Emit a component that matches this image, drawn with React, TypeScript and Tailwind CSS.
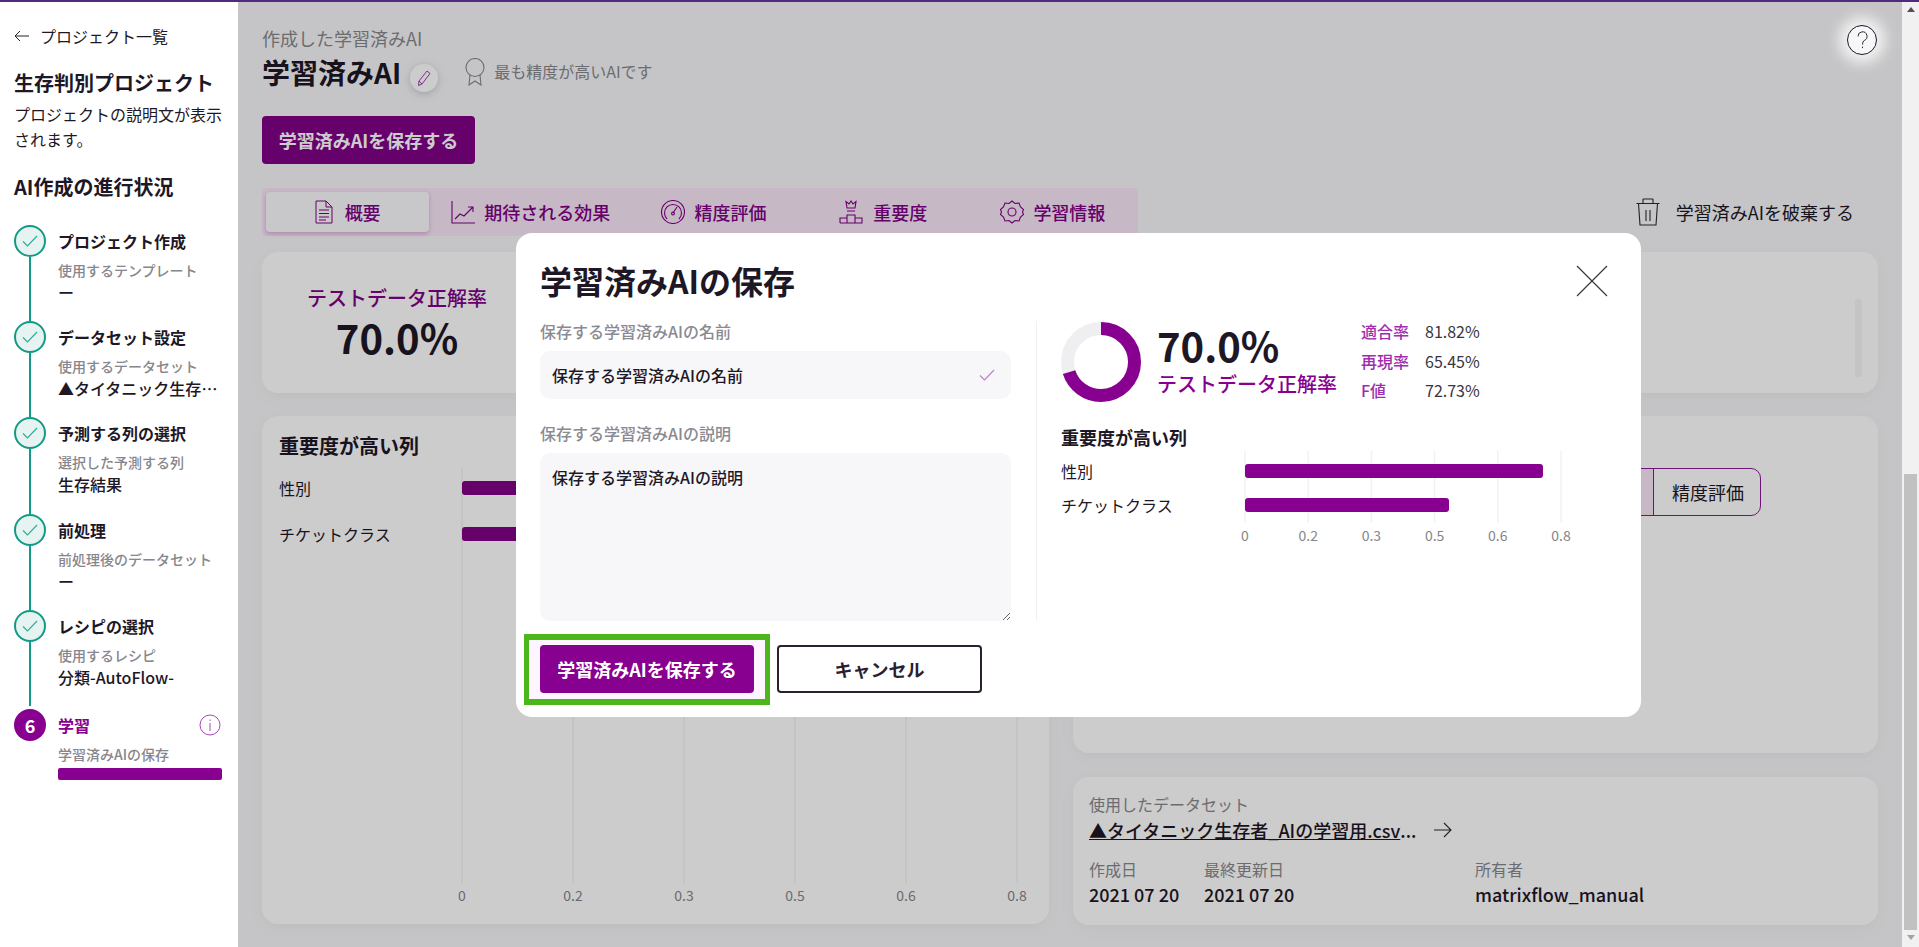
import React from "react";

const Check = ({ className = "" }: { className?: string }) => (
  <svg viewBox="0 0 16 12" className={className} fill="none" stroke="currentColor" strokeWidth="1.1">
    <path d="M1 6.5 L5.5 11 L15 1" />
  </svg>
);

const steps = [
  { t: "プロジェクト作成", s: "使用するテンプレート", v: "ー", h: "h-[96px]" },
  { t: "データセット設定", s: "使用するデータセット", v: "▲タイタニック生存者_AIの学習用.csv", h: "h-[96px]" },
  { t: "予測する列の選択", s: "選択した予測する列", v: "生存結果", h: "h-[97px]" },
  { t: "前処理", s: "前処理後のデータセット", v: "ー", h: "h-[96px]" },
  { t: "レシピの選択", s: "使用するレシピ", v: "分類-AutoFlow-", h: "h-[99px] pb-[3px]" },
];

function Sidebar() {
  return (
    <aside className="w-[238px] shrink-0 bg-white pl-[14px] pt-[22px] text-[#1d1726]">
      <div className="flex items-center h-6 text-[16px] leading-6">
        <svg viewBox="0 0 15 12" className="w-[15px] h-[12px]" fill="none" stroke="#222" strokeWidth="1">
          <path d="M15 6 H1 M6 1 L1 6 L6 11" />
        </svg>
        <span className="ml-[11px]">プロジェクト一覧</span>
      </div>
      <h1 className="mt-5 text-[20px] leading-[30px] font-bold">生存判別プロジェクト</h1>
      <p className="mt-[4px] w-[212px] text-[16px] leading-[25px]">プロジェクトの説明文が表示されます。</p>
      <h2 className="mt-5 text-[20px] leading-[30px] font-bold">AI作成の進行状況</h2>
      <div className="mt-[23px]">
        {steps.map((st) => (
          <div key={st.t} className={`flex ${st.h}`}>
            <div className="flex flex-col items-center w-8 shrink-0">
              <div className="w-8 h-8 shrink-0 rounded-full border-2 border-[#119a85] bg-[#e5f3f1] flex items-center justify-center text-[#2fa996]">
                <Check className="w-[16px] h-[12px]" />
              </div>
              <div className="w-[2px] flex-1 bg-[#119a85]" />
            </div>
            <div className="ml-[12px] w-[164px] min-w-0">
              <div className="h-8 flex items-center text-[16px] font-bold">{st.t}</div>
              <div className="mt-[3px] text-[14px] leading-5 text-[#86868c] font-medium">{st.s}</div>
              <div className="text-[16px] leading-6 font-medium truncate">{st.v}</div>
            </div>
          </div>
        ))}
        <div className="flex">
          <div className="w-8 h-8 rounded-full bg-[#870090] text-white text-[18px] font-bold flex items-center justify-center shrink-0">6</div>
          <div className="ml-[12px] w-[164px]">
            <div className="h-8 flex items-center justify-between text-[16px] font-bold text-[#870090]">
              <span>学習</span>
              <svg viewBox="0 0 22 22" className="w-[22px] h-[22px] mr-px" fill="none" stroke="#a848b8" strokeWidth="1">
                <circle cx="11" cy="11" r="10" />
                <path d="M11 9 V17 M11 5.5 V7" />
              </svg>
            </div>
            <div className="mt-[3px] text-[14px] leading-5 text-[#86868c] font-medium">学習済みAIの保存</div>
            <div className="mt-[4px] h-[12px] rounded-[2px] bg-[#870090]" />
          </div>
        </div>
      </div>
    </aside>
  );
}

const I = "#800086";
const DocIcon = () => (
  <svg viewBox="0 0 18 24" className="w-[18px] h-[24px]" fill="none" stroke={I} strokeWidth="1">
    <path d="M1 1 H11 L17 7 V23 H1 Z M11 1 V7 H17 M4 10 H14 M4 13.5 H14 M4 17 H14 M4 20 H11" />
  </svg>
);
const TrendIcon = () => (
  <svg viewBox="0 0 24 24" className="w-[24px] h-[24px]" fill="none" stroke={I} strokeWidth="1.1">
    <path d="M1 1 V23 H24 M4 19 L9 14 L13 16 L22 7 M17 7 H22 V12" />
  </svg>
);
const GaugeIcon = () => (
  <svg viewBox="0 0 26 24" className="w-[26px] h-[24px]" fill="none" stroke={I} strokeWidth="1.1">
    <circle cx="13" cy="12" r="11.5" />
    <path d="M7 19 A8.5 8.5 0 1 1 19 19 M13 13 L17 7" />
    <circle cx="13" cy="13.5" r="1.4" />
  </svg>
);
const PodiumIcon = () => (
  <svg viewBox="0 0 24 24" className="w-[24px] h-[24px]" fill="none" stroke={I} strokeWidth="1.1">
    <path d="M8 8 L7 1.5 L10 4 L12 1 L14 4 L17 1.5 L16 8 Z M8 11 H16 M8 23 V15 H16 V23 M1 23 V18 H8 M16 18 H23 V23 H1" />
  </svg>
);
const GearIcon = () => (
  <svg viewBox="0 0 24 24" className="w-[24px] h-[24px]" fill="none" stroke={I} strokeWidth="1.1">
    <path d="M12 1 L15 3.5 L19 3 L20.5 7 L23.5 9.5 L22.5 12 L23.5 14.5 L20.5 17 L19 21 L15 20.5 L12 23 L9 20.5 L5 21 L3.5 17 L0.5 14.5 L1.5 12 L0.5 9.5 L3.5 7 L5 3 L9 3.5 Z" />
    <circle cx="12" cy="12" r="4" />
  </svg>
);

const tabs = [
  { t: "概要", w: "w-[164px]", i: <DocIcon />, g: "gap-[12px]", a: true },
  { t: "期待される効果", w: "w-[204px]", i: <TrendIcon />, g: "gap-[9px]" },
  { t: "精度評価", w: "w-[163px]", i: <GaugeIcon />, g: "gap-[8px]" },
  { t: "重要度", w: "w-[178px]", i: <PodiumIcon />, g: "gap-[10px]" },
  { t: "学習情報", w: "w-[163px]", i: <GearIcon />, g: "gap-[9px]" },
];

function Chart({ w, h, ticks, bars, top, bottom, color, className = "" }: { w: number; h: number; ticks: { x: number; l: string }[]; bars: { y: number; w: number }[]; top: number; bottom: number; color: string; className?: string }) {
  return (
    <svg width={w} height={h} className={`shrink-0 overflow-visible ${className}`}>
      {ticks.map((t) => (
        <g key={t.l}>
          <line x1={t.x} x2={t.x} y1={top} y2={bottom} stroke="#f2f2f4" strokeWidth="1.5" />
          <text x={t.x} y={bottom + 18} textAnchor="middle" fontSize="14" fill="#85858b">{t.l}</text>
        </g>
      ))}
      {bars.map((b) => (
        <rect key={b.y} x={ticks[0].x} y={b.y} width={b.w} height="14" rx="3" fill={color} />
      ))}
    </svg>
  );
}

function Main() {
  return (
    <main className="relative flex-1 min-w-0 bg-[#f7f7f9] pt-[24px] px-6 text-[#1d1726] overflow-hidden">
      <div className="text-[18px] leading-6 text-[#88888c]">作成した学習済みAI</div>
      <div className="mt-[2px] flex items-center h-10">
        <div className="text-[28px] leading-10 font-bold">学習済みAI</div>
        <div className="ml-[9px] mt-[12px] w-7 h-7 rounded-full bg-white shadow-[0_2px_8px_rgba(0,0,0,0.18)] flex items-center justify-center">
          <svg viewBox="0 0 16 18" className="w-[16px] h-[18px]" fill="none" stroke="#a03cb0" strokeWidth="1">
            <path d="M3 12 L11 2 L14 4.5 L6 15 L2.5 16.5 Z M3 12 L6 15" />
          </svg>
        </div>
        <svg viewBox="0 0 20 28" className="ml-[27px] w-[20px] h-[28px]" fill="none" stroke="#888" strokeWidth="1.1">
          <ellipse cx="10" cy="9.5" rx="9" ry="9" />
          <path d="M5 17 L4 27 L10 23 L16 27 L15 17" />
        </svg>
        <span className="ml-[9px] -mt-[2px] text-[16px] text-[#88888c]">最も精度が高いAIです</span>
      </div>
      <button className="mt-[24px] block h-12 w-[213px] rounded-[4px] bg-[#800086] text-white text-[18px] font-bold">学習済みAIを保存する</button>

      <div className="mt-6 flex items-center justify-between">
        <div className="flex h-12 w-[876px] rounded-[4px] bg-[#f9e6f8] p-1 text-[18px] font-medium text-[#800086]">
          {tabs.map((t) => (
            <div key={t.t} className={`${t.w} flex items-center justify-center ${t.g} rounded-[4px] ${t.a ? "bg-[#fbf9fc] shadow-[0_2px_4px_rgba(135,0,144,0.25)]" : ""}`}>
              {t.i}
              <span>{t.t}</span>
            </div>
          ))}
        </div>
        <div className="flex items-center mr-[24px]">
          <svg viewBox="0 0 24 28" className="w-[24px] h-[28px]" fill="none" stroke="#2a2a2e" strokeWidth="1.1">
            <path d="M0.5 5.5 H23.5 M7 5.5 V1.5 Q7 1 7.5 1 H16.5 Q17 1 17 1.5 V5.5 M2.5 5.5 L4 27 H20 L21.5 5.5 M10 12 V23 M14 12 V23" />
          </svg>
          <span className="ml-4 text-[18px]">学習済みAIを破棄する</span>
        </div>
      </div>

      <div className="mt-4 h-[141px] rounded-2xl bg-white shadow-[0_4px_16px_rgba(0,0,0,0.04)] flex items-center justify-between">
        <div className="w-[270px] text-center">
          <div className="text-[20px] leading-7 font-medium text-[#800086]">テストデータ正解率</div>
          <div className="text-[40px] leading-[50px] font-bold">70.0%</div>
        </div>
        <div className="mr-4 mt-[30px] w-[7px] h-[78px] rounded-full bg-[#f5f5f7]" />
      </div>

      <div className="mt-[23px] flex gap-6">
        <section className="w-[787px] h-[508px] rounded-2xl bg-white shadow-[0_4px_16px_rgba(0,0,0,0.04)] pl-[17px] pt-[17px]">
          <h3 className="text-[20px] leading-[26px] font-bold">重要度が高い列</h3>
          <div className="mt-[9px] flex">
            <div className="w-[183px] flex flex-col gap-[6px] text-[16px]">
              <div className="h-10 flex items-center">性別</div>
              <div className="h-10 flex items-center">チケットクラス</div>
            </div>
            <Chart
              w={570}
              h={440}
              top={0}
              bottom={415}
              color="#800086"
              ticks={[0, 1, 2, 3, 4, 5].map((i) => ({ x: i * 111, l: ["0", "0.2", "0.3", "0.5", "0.6", "0.8"][i] }))}
              bars={[{ y: 13, w: 523 }, { y: 59, w: 358 }]}
            />
          </div>
        </section>
        <div className="flex-1 min-w-0 flex flex-col gap-6">
          <section className="h-[337px] rounded-2xl bg-white shadow-[0_4px_16px_rgba(0,0,0,0.04)] flex justify-end items-start pt-[52px] pr-[117px]">
            <div className="flex h-12 rounded-[10px] border-[1.5px] border-[#8a1a98]">
              <div className="w-[180px] rounded-l-[10px] bg-[#f9e6f8] border-r-[1.5px] border-[#8a1a98]" />
              <div className="pl-[18px] pr-[16px] flex items-center text-[18px]">精度評価</div>
            </div>
          </section>
          <section className="h-[148px] rounded-2xl bg-white shadow-[0_4px_16px_rgba(0,0,0,0.04)] pl-4 pt-[15px]">
            <div className="text-[16px] leading-6 text-[#88888c]">使用したデータセット</div>
            <div className="flex items-center h-7 text-[18px] leading-7 font-medium">
              <span className="underline">▲タイタニック生存者_AIの学習用.csv</span>
              <span>...</span>
              <svg viewBox="0 0 18 16" className="ml-[18px] w-[18px] h-[16px]" fill="none" stroke="#2a2a2e" strokeWidth="1.1">
                <path d="M0 8 H17 M10 1 L17 8 L10 15" />
              </svg>
            </div>
            <div className="mt-[13px] flex">
              <div className="w-[115px]">
                <div className="text-[16px] leading-6 text-[#88888c]">作成日</div>
                <div className="text-[18px] leading-[26px] font-medium">2021 07 20</div>
              </div>
              <div className="w-[271px]">
                <div className="text-[16px] leading-6 text-[#88888c]">最終更新日</div>
                <div className="text-[18px] leading-[26px] font-medium">2021 07 20</div>
              </div>
              <div>
                <div className="text-[16px] leading-6 text-[#88888c]">所有者</div>
                <div className="text-[18px] leading-[26px] font-medium">matrixflow_manual</div>
              </div>
            </div>
          </section>
        </div>
      </div>

      <div className="absolute inset-0 z-10 bg-black/20" />

      <div className="absolute z-20 top-[23px] right-[25px] w-[30px] h-[30px] rounded-full border-[1.5px] border-[#1d1726] bg-[#f7f7f9] shadow-[0_0_14px_8px_rgba(255,255,255,0.8)] flex items-center justify-center">
        <svg viewBox="0 0 12 20" className="w-[11px] h-[18px]" fill="none" stroke="#2a2a2e" strokeWidth="1.1">
          <path d="M1 6 A5 5 0 1 1 8 10.5 Q6 12 6 15 M6 17.5 V19" />
        </svg>
      </div>

      <Modal />
    </main>
  );
}

function Modal() {
  return (
    <div className="absolute z-30 left-[278px] top-[231px] w-[1125px] h-[484px] rounded-2xl bg-white px-6 pt-8">
      <div className="flex items-center justify-between h-8 mb-6">
        <h2 className="mb-[2px] text-[32px] leading-8 font-bold">学習済みAIの保存</h2>
        <svg viewBox="0 0 32 32" className="w-[32px] h-[32px] mr-[9px]" fill="none" stroke="#333" strokeWidth="1.1">
          <path d="M1 1 L31 31 M31 1 L1 31" />
        </svg>
      </div>
      <div className="flex h-[300px]">
        <div className="w-[471px] shrink-0">
          <div className="pb-[2px] text-[16px] leading-[20px] font-medium text-[#8a8a92]">保存する学習済みAIの名前</div>
          <div className="mt-2 h-12 rounded-[10px] bg-[#f7f7f9] flex items-center pl-[12px] pr-4">
            <input readOnly defaultValue="保存する学習済みAIの名前" className="flex-1 min-w-0 bg-transparent text-[16px] font-medium outline-none text-[#1d1726]" />
            <Check className="w-[16px] h-[12px] text-[#c27ad2]" />
          </div>
          <div className="mt-6 pb-[2px] text-[16px] leading-[20px] font-medium text-[#8a8a92]">保存する学習済みAIの説明</div>
          <textarea readOnly defaultValue="保存する学習済みAIの説明" className="mt-2 block w-full h-[168px] rounded-[10px] bg-[#f7f7f9] px-[12px] py-[12px] text-[16px] leading-6 font-medium outline-none text-[#1d1726]" />
        </div>
        <div className="w-px ml-[25px] bg-[#f0f0f2]" />
        <div className="ml-6 flex-1 min-w-0">
          <div className="flex">
            <svg viewBox="0 0 80 80" className="w-20 h-20 mt-px shrink-0">
              <circle cx="40" cy="40" r="33.5" fill="none" stroke="#efeff1" strokeWidth="13" />
              <circle cx="40" cy="40" r="33.5" fill="none" stroke="#870090" strokeWidth="13" strokeDasharray="147.3 210.5" transform="rotate(-90 40 40)" />
            </svg>
            <div className="ml-4 w-[178px] -mt-px">
              <div className="text-[40px] leading-[50px] font-bold">70.0%</div>
              <div className="text-[20px] leading-7 font-medium text-[#870090] whitespace-nowrap">テストデータ正解率</div>
            </div>
            <div className="ml-[26px] -mt-[2px] flex flex-col gap-[5.5px] text-[16px] leading-6">
              {[["適合率", "81.82%"], ["再現率", "65.45%"], ["F値", "72.73%"]].map(([a, b]) => (
                <div key={a} className="flex">
                  <span className="w-16 font-medium text-[#a02cb0]">{a}</span>
                  <span className="text-[#3a3540]">{b}</span>
                </div>
              ))}
            </div>
          </div>
          <h3 className="mt-[22px] text-[18px] leading-[26px] font-bold">重要度が高い列</h3>
          <div className="flex">
            <div className="w-[176px] pt-[4px] text-[16px] leading-[34px]">
              <div>性別</div>
              <div>チケットクラス</div>
            </div>
            <Chart
              className="mt-px"
              w={340}
              h={100}
              top={0}
              bottom={72}
              color="#870090"
              ticks={[0, 1, 2, 3, 4, 5].map((i) => ({ x: 8 + i * 63.2, l: ["0", "0.2", "0.3", "0.5", "0.6", "0.8"][i] }))}
              bars={[{ y: 13, w: 298 }, { y: 47, w: 204 }]}
            />
          </div>
        </div>
      </div>
      <div className="mt-6 flex gap-[23px]">
        <div className="relative">
          <div className="absolute -left-[16px] -right-[16px] -top-[11px] -bottom-[12px] border-y-[6px] border-x-[5px] border-[#4cb71a] bg-[#fdf5ff]" />
          <button className="relative block h-12 w-[214px] rounded-[4px] bg-[#870090] text-white text-[18px] font-bold">学習済みAIを保存する</button>
        </div>
        <button className="h-12 w-[205px] rounded-[4px] border-2 border-[#2a2030] bg-white text-[18px] font-bold text-[#2a2030]">キャンセル</button>
      </div>
    </div>
  );
}

function Scrollbar() {
  return (
    <div className="w-[17px] shrink-0 bg-[#f1f1f1] flex flex-col items-center">
      <svg viewBox="0 0 8 5" className="w-2 h-[5px] mt-[5px]"><path d="M4 0 L8 5 H0 Z" fill="#505050" /></svg>
      <div className="h-[462px] shrink-0" />
      <div className="w-[13px] h-[456px] bg-[#c1c1c1]" />
      <svg viewBox="0 0 8 5" className="w-2 h-[5px] mt-[5px]"><path d="M0 0 H8 L4 5 Z" fill="#a3a3a3" /></svg>
    </div>
  );
}

export default function App() {
  return (
    <div className="w-[1919px] h-[947px] flex flex-col overflow-hidden font-['Noto_Sans_CJK_JP',sans-serif]">
      <div className="h-[2px] shrink-0 bg-[#4f2a80]" />
      <div className="flex flex-1 min-h-0">
        <Sidebar />
        <Main />
        <Scrollbar />
      </div>
    </div>
  );
}
